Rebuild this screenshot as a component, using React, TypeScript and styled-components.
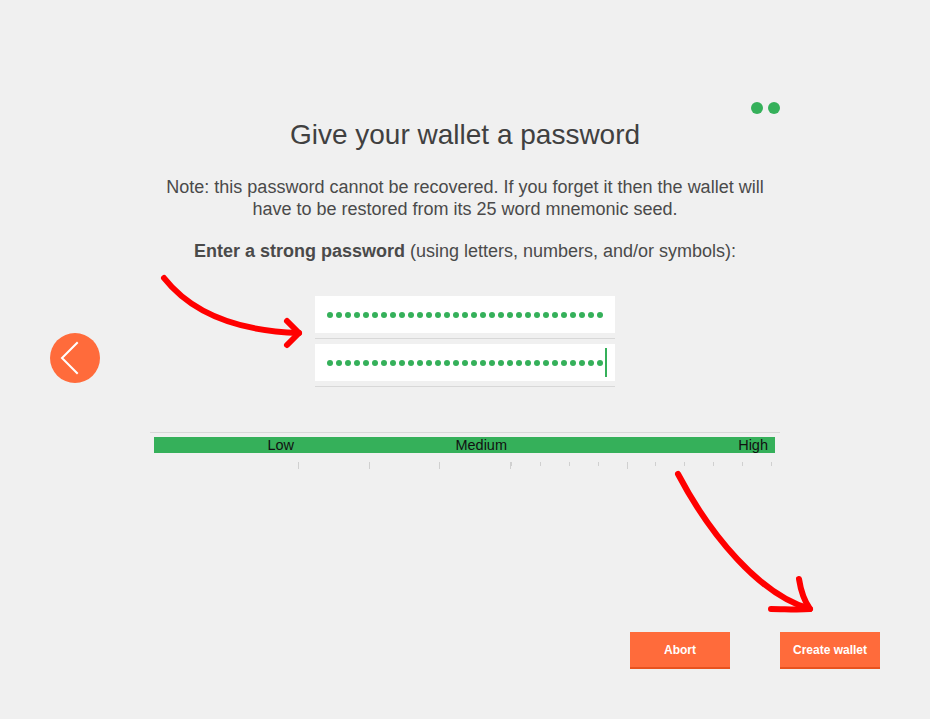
import React from "react";
import styled, { createGlobalStyle } from "styled-components";

const GlobalStyle = createGlobalStyle`
  html, body { margin: 0; padding: 0; background: #f0f0f0; }
  body { font-family: "Liberation Sans", Arial, sans-serif; }
`;

const ORANGE = "#ff6b3b";
const GREEN = "#35b05a";

const Page = styled.div`
  position: relative;
  width: 930px;
  height: 719px;
  display: grid;
  grid-template-columns: 150px 630px 150px;
  grid-template-rows: 1fr auto;
  background: #f0f0f0;
  overflow: hidden;
`;

const Side = styled.div`
  grid-column: 1;
  grid-row: 1 / span 2;
  display: flex;
  align-items: center;
  justify-content: center;
  padding-bottom: 3px;
`;

const BackButton = styled.button`
  width: 50px;
  height: 50px;
  border-radius: 50%;
  border: none;
  padding: 0;
  background: ${ORANGE};
  display: flex;
  align-items: center;
  justify-content: center;
  cursor: pointer;
`;

const Main = styled.main`
  grid-column: 2;
  grid-row: 1;
  display: flex;
  flex-direction: column;
  align-items: center;
  padding-top: 102px;
`;

const StepDots = styled.div`
  align-self: flex-end;
  display: flex;
  gap: 5px;
`;

const StepDot = styled.span`
  width: 12px;
  height: 12px;
  border-radius: 50%;
  background: ${GREEN};
`;

const Title = styled.h1`
  margin: 6px 0 0;
  font-size: 28px;
  line-height: 30px;
  font-weight: 400;
  color: #404040;
  text-align: center;
  white-space: nowrap;
`;

const Note = styled.p`
  margin: 26px 0 0;
  width: 630px;
  font-size: 18px;
  line-height: 22px;
  color: #4a4a4a;
  text-align: center;
`;

const Prompt = styled.p`
  margin: 20px 0 0;
  font-size: 18px;
  line-height: 22px;
  color: #4a4a4a;
  text-align: center;
  white-space: nowrap;
  b { font-weight: 700; }
`;

const Fields = styled.div`
  margin-top: 34px;
  width: 300px;
  display: flex;
  flex-direction: column;
  gap: 5px;
`;

const Field = styled.div`
  padding-bottom: 5px;
  border-bottom: 1px solid #d8d8d8;
`;

const InputBox = styled.div`
  height: 37px;
  background: #ffffff;
  display: flex;
  align-items: center;
  padding-left: 12px;
  box-sizing: border-box;
`;

const Masked = styled.div`
  display: flex;
  gap: 3px;
`;

const Bullet = styled.span`
  width: 6px;
  height: 6px;
  border-radius: 50%;
  background: ${GREEN};
`;

const Caret = styled.span`
  width: 2px;
  height: 29px;
  margin-left: 2px;
  background: ${GREEN};
`;

const Meter = styled.div`
  margin-top: 45px;
  width: 630px;
  border-top: 1px solid #d8d8d8;
  padding-top: 4px;
`;

const Bar = styled.div`
  margin: 0 5px 0 4px;
  height: 16px;
  background: ${GREEN};
  display: grid;
  grid-template-columns: 144px 213px 1fr;
`;

const Level = styled.span<{ $pad?: number }>`
  font-size: 14.5px;
  line-height: 16px;
  color: #111;
  text-align: right;
  padding-right: ${(p) => p.$pad ?? 4}px;
`;

const Ticks = styled.svg`
  display: block;
  margin-top: 9px;
`;

const Footer = styled.footer`
  grid-column: 2 / span 2;
  grid-row: 2;
  display: flex;
  justify-content: flex-end;
  gap: 50px;
  padding: 0 50px 50px 0;
`;

const ActionButton = styled.button`
  width: 100px;
  height: 37px;
  border: none;
  border-bottom: 2px solid #e8521f;
  background: ${ORANGE};
  color: #fff;
  font-family: "Liberation Sans", Arial, sans-serif;
  font-size: 12px;
  font-weight: 700;
  padding: 0;
  cursor: pointer;
`;

const Overlay = styled.svg`
  position: absolute;
  left: 0;
  top: 0;
  pointer-events: none;
`;

const tall = [298, 369, 439, 510, 627];
const short = [511, 540, 569, 598, 655, 684, 713, 742, 771];

function PasswordField({ caret }: { caret?: boolean }) {
  return (
    <Field>
      <InputBox>
        <Masked>
          {Array.from({ length: 31 }).map((_, i) => (
            <Bullet key={i} />
          ))}
        </Masked>
        {caret && <Caret />}
      </InputBox>
    </Field>
  );
}

export default function App() {
  return (
    <>
      <GlobalStyle />
      <Page>
        <Side>
          <BackButton aria-label="Back">
            <svg width="50" height="50" viewBox="0 0 50 50">
              <path d="M27 10 L12 25 L27 40" fill="none" stroke="#fff" strokeWidth="2" strokeLinecap="square" />
            </svg>
          </BackButton>
        </Side>
        <Main>
          <StepDots>
            <StepDot />
            <StepDot />
          </StepDots>
          <Title>Give your wallet a password</Title>
          <Note>
            Note: this password cannot be recovered. If you forget it then the wallet will
            <br />
            have to be restored from its 25 word mnemonic seed.
          </Note>
          <Prompt>
            <b>Enter a strong password</b> (using letters, numbers, and/or symbols):
          </Prompt>
          <Fields>
            <PasswordField />
            <PasswordField caret />
          </Fields>
          <Meter>
            <Bar>
              <Level>Low</Level>
              <Level>Medium</Level>
              <Level $pad={7}>High</Level>
            </Bar>
            <Ticks width="630" height="8" viewBox="0 0 630 8">
              {tall.map((x) => (
                <line key={"t" + x} x1={x - 150 + 0.5} x2={x - 150 + 0.5} y1="0" y2="7" stroke="#d0d0d0" strokeWidth="1" />
              ))}
              {short.map((x) => (
                <line key={"s" + x} x1={x - 150 + 0.5} x2={x - 150 + 0.5} y1="0" y2="4" stroke="#d0d0d0" strokeWidth="1" />
              ))}
            </Ticks>
          </Meter>
        </Main>
        <Footer>
          <ActionButton>Abort</ActionButton>
          <ActionButton>Create wallet</ActionButton>
        </Footer>
        <Overlay width="930" height="719" viewBox="0 0 930 719">
          <g fill="none" stroke="#ff0000" strokeWidth="6" strokeLinecap="round" strokeLinejoin="round">
            <path d="M164 278 Q 205 330 299 333" />
            <path d="M287 321 L299 333 L287 345" />
            <path d="M678 474 C 710 535, 760 595, 810 609" />
            <path d="M799 579 C 801 592, 805 602, 810 609 C 797 610, 785 609, 771 609" />
          </g>
        </Overlay>
      </Page>
    </>
  );
}
